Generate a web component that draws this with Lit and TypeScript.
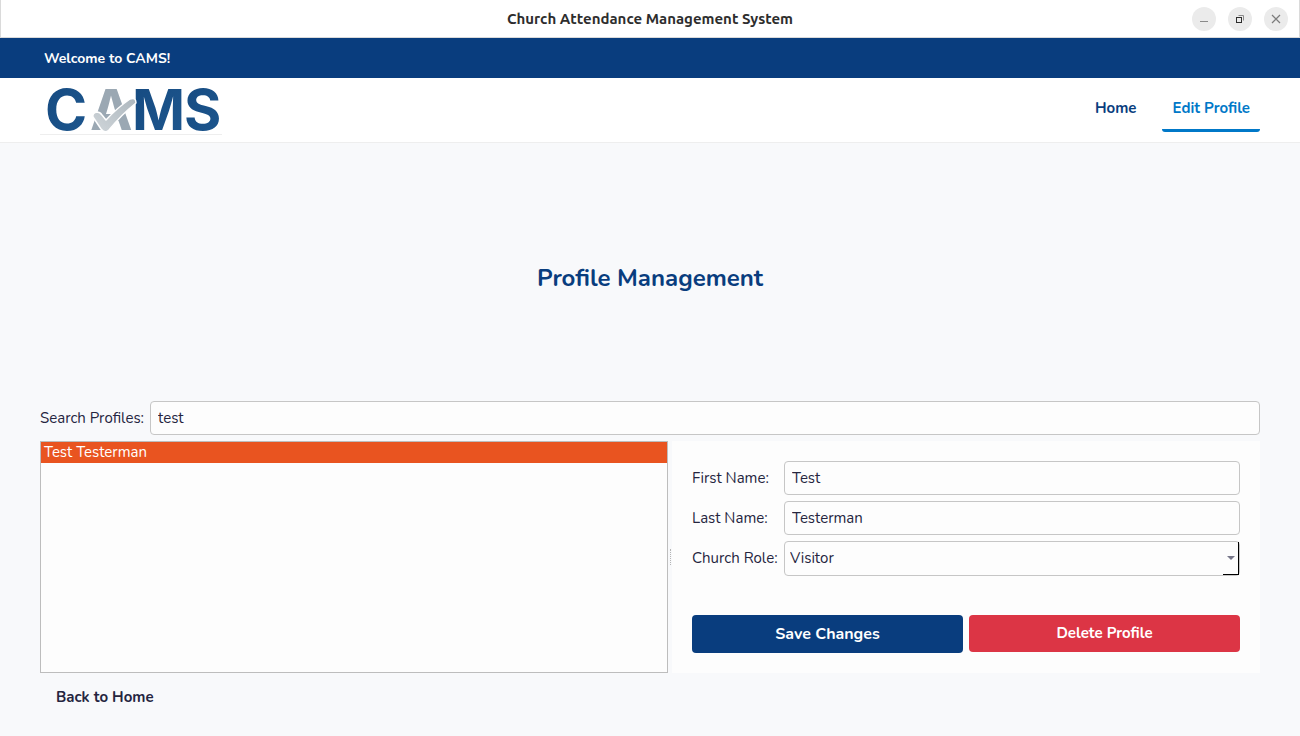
import { LitElement, html, css, svg } from "lit";
import { customElement, state } from "lit/decorators.js";

const minimizeIcon = svg`<path d="M8 14.5h8" stroke="#8a8a8a"/>`;
const restoreIcon = svg`<path d="M10.5 8.5h5v5" stroke="#8a8a8a"/><rect x="8.5" y="10.5" width="5" height="5" stroke="#2d2d2d"/>`;
const closeIcon = svg`<path d="M8 8l8 8M16 8l-8 8" stroke="#7c7c7c" stroke-width="1.2"/>`;

@customElement("cams-logo")
export class CamsLogo extends LitElement {
  static styles = css`
    :host { display: block; border-bottom: 1px solid #eeeeee; }
    svg { display: block; overflow: visible; }
    .letter { font: 700 57px Inter, "Liberation Sans", sans-serif; }
  `;
  render() {
    return html`<svg width="182" height="50" viewBox="0 0 182 50" role="img" aria-label="CAMS">
      <defs>
        <linearGradient id="blue" x1="0" y1="0" x2="1" y2="1">
          <stop offset="0" stop-color="#164a80" /><stop offset="1" stop-color="#1d578f" />
        </linearGradient>
        <linearGradient id="tick" x1="0" y1="1" x2="1" y2="0">
          <stop offset="0" stop-color="#d0d6da" /><stop offset="1" stop-color="#adb7be" />
        </linearGradient>
      </defs>
      <text class="letter" x="5" y="46" fill="url(#blue)">C</text>
      <text class="letter" x="50" y="46" fill="#9ba8b3">A</text>
      <text class="letter" x="92" y="46" fill="url(#blue)">M</text>
      <text class="letter" x="144" y="46" fill="url(#blue)">S</text>
      <path d="M53 33Q52 29 57 28Q60 28 62 31L66 36Q77 24 90 15Q96 13 96 19Q81 31 69 46Q65 50 61 45Z"
        fill="url(#tick)" stroke="#ffffff" stroke-width="1.5" stroke-linejoin="round" />
    </svg>`;
  }
}

@customElement("app-root")
export class AppRoot extends LitElement {
  @state() private query = "test";
  @state() private selected = 0;
  private profiles = [{ first: "Test", last: "Testerman", role: "Visitor" }];

  static styles = css`
    :host {
      display: flex; flex-direction: column; min-height: 100vh;
      background: #f8f9fb; color: #25253f;
      font: 15px/20px Nunito, Lato, "Noto Sans", sans-serif;
    }
    * { box-sizing: border-box; }
    button, input, select { font: inherit; color: inherit; margin: 0; }
    a { text-decoration: none; color: inherit; }

    .titlebar {
      display: grid; grid-template-columns: 1fr auto 1fr; align-items: center;
      height: 38px; padding: 0 11px;
      background: #ffffff; border: 1px solid #dadada; border-top: 0;
    }
    .title { grid-column: 2; font: 700 15px/20px Ubuntu, "Noto Sans", sans-serif; color: #2d2d2d; }
    .controls { display: flex; gap: 12px; justify-self: end; }
    .control { width: 24px; height: 24px; padding: 0; border: 0; border-radius: 50%; background: #ebebeb; }
    .control svg { display: block; fill: none; }

    .welcome { padding: 11px 44px 9px; background: #093d7e; color: #ffffff; font-size: 14px; font-weight: 700; }

    .header {
      display: flex; justify-content: space-between; align-items: flex-start;
      height: 65px; padding: 6px 40px;
      background: #ffffff; border-bottom: 1px solid #eeeeee;
    }
    .nav { display: flex; gap: 16px; font-weight: 700; color: #093d7e; }
    .link { padding: 14px 10px 11px; border-bottom: 3px solid transparent; border-radius: 3px; }
    .link.active { color: #0078c8; border-bottom-color: #0078c8; }

    .hero { flex: 1; display: grid; place-items: center; padding-top: 12px; }
    h1 { margin: 0; font-size: 24px; line-height: 32px; font-weight: 700; color: #093d7e; }

    .content { display: flex; flex-direction: column; gap: 6px; padding: 0 40px; }
    .search { display: flex; align-items: center; gap: 6px; }
    label { white-space: nowrap; }
    .field {
      flex: 1; width: 100%; min-width: 0; height: 34px; padding: 0 7px;
      border: 1px solid #c6c6c6; border-radius: 4px; background: #fdfdfd; outline: none;
    }
    .split { display: grid; grid-template-columns: 628fr 4px 588fr; min-height: 232px; }
    .list { margin: 0; padding: 0; list-style: none; background: #fdfdfd; border: 1px solid #bdbdbd; }
    .item { padding: 0 3px 1px; }
    .item.selected { background: #e95420; color: #ffffff; }
    .grip { align-self: center; justify-self: center; height: 16px; border-left: 1px dotted #b5b5b5; }

    .form { display: flex; flex-direction: column; justify-content: space-between; padding: 20px; background: #fdfdfd; }
    .fields { display: grid; grid-template-columns: 86px 1fr; gap: 6px; align-items: center; }
    .fields label { padding-bottom: 1px; }
    .combo { position: relative; }
    .combo select { display: block; height: 35px; padding: 0 5px 1px; appearance: none; }
    .drop {
      position: absolute; right: 1px; top: 1px; bottom: 1px; width: 16px;
      display: grid; place-items: center; pointer-events: none;
      border: solid #000000; border-width: 0 1px 1px 0;
    }
    .drop svg { display: block; }
    .actions { display: grid; grid-template-columns: 1fr 1fr; gap: 6px; align-items: start; }
    .action { padding: 9px; border: 0; border-radius: 4px; color: #ffffff; font-weight: 700; }
    .save { background: #093d7e; font-size: 16px; }
    .delete { padding: 8px 9px 9px; background: #dc3545; }

    .footer { padding: 14px 56px 29px; font-weight: 700; }
  `;

  render() {
    const matches = this.profiles.filter((p) =>
      `${p.first} ${p.last}`.toLowerCase().includes(this.query.toLowerCase()));
    const current = this.profiles[this.selected];
    return html`
      <div class="titlebar">
        <span class="title">Church Attendance Management System</span>
        <div class="controls">
          ${[["Minimize", minimizeIcon], ["Restore", restoreIcon], ["Close", closeIcon]].map(
            ([label, icon]) => html`<button class="control" aria-label=${label}>
              <svg width="24" height="24" viewBox="0 0 24 24">${icon}</svg>
            </button>`)}
        </div>
      </div>
      <div class="welcome">Welcome to CAMS!</div>
      <header class="header">
        <cams-logo></cams-logo>
        <nav class="nav">
          <a class="link" href="#home">Home</a>
          <a class="link active" href="#profile" aria-current="page">Edit Profile</a>
        </nav>
      </header>
      <div class="hero"><h1>Profile Management</h1></div>
      <main class="content">
        <div class="search">
          <label for="search">Search Profiles:</label>
          <input class="field" id="search" .value=${this.query}
            @input=${(e: InputEvent) => (this.query = (e.target as HTMLInputElement).value)} />
        </div>
        <div class="split">
          <ul class="list" role="listbox" aria-label="Profiles">
            ${matches.map((p) => {
              const index = this.profiles.indexOf(p);
              return html`<li role="option" aria-selected=${index === this.selected}
                class="item ${index === this.selected ? "selected" : ""}"
                @click=${() => (this.selected = index)}>${p.first} ${p.last}</li>`;
            })}
          </ul>
          <span class="grip"></span>
          <form class="form" @submit=${(e: Event) => e.preventDefault()}>
            <div class="fields">
              <label for="first">First Name:</label>
              <input class="field" id="first" .value=${current.first} />
              <label for="last">Last Name:</label>
              <input class="field" id="last" .value=${current.last} />
              <label for="role">Church Role:</label>
              <div class="combo">
                <select class="field" id="role"><option>${current.role}</option></select>
                <span class="drop"><svg width="8" height="4" viewBox="0 0 8 4"><path d="M0 0h8L4 4z" fill="#77778a" /></svg></span>
              </div>
            </div>
            <div class="actions">
              <button class="action save">Save Changes</button>
              <button class="action delete" type="button">Delete Profile</button>
            </div>
          </form>
        </div>
      </main>
      <footer class="footer"><a href="#home">Back to Home</a></footer>
    `;
  }
}
